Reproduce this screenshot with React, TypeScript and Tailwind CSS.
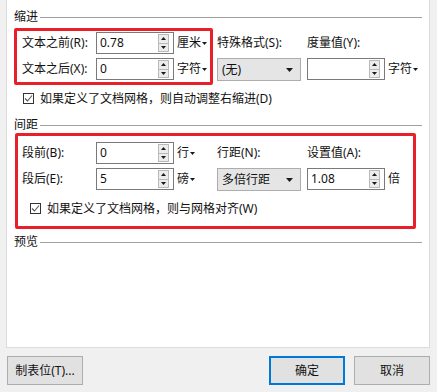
import React from 'react';

const Tri = ({ down = true, w = 7, h = 4, className = '' }: { down?: boolean; w?: number; h?: number; className?: string }) => (
  <svg width={w} height={h} viewBox={`0 0 ${w} ${h}`} className={className}>
    {down ? (
      <polygon points={`0,0 ${w},0 ${w / 2},${h}`} fill="#1a1a1a" />
    ) : (
      <polygon points={`0,${h} ${w},${h} ${w / 2},0`} fill="#1a1a1a" />
    )}
  </svg>
);

const Spin = ({ value }: { value: string }) => (
  <div className="flex items-center w-[78px] h-[22px] border border-[#7a7a7a] bg-white">
    <span className="flex-1 pl-[3px] leading-none">{value}</span>
    <div className="mr-[4px] flex flex-col w-[11px] h-[18px] border border-[#b9b9b9] bg-[#ececec]">
      <div className="flex-1 flex items-center justify-center border-b border-[#b9b9b9]">
        <Tri down={false} w={5} h={3} />
      </div>
      <div className="flex-1 flex items-center justify-center">
        <Tri w={5} h={3} />
      </div>
    </div>
  </div>
);

const Unit = ({ text, arrow = true }: { text: string; arrow?: boolean }) => (
  <div className="flex items-center ml-[3px]">
    <span>{text}</span>
    {arrow && <Tri w={5} h={3} className="ml-[1px]" />}
  </div>
);

const Select = ({ text }: { text: string }) => (
  <div className="flex items-center w-[84px] h-[23px] border border-[#adadad] bg-[#e5e5e5] pl-[4px] pr-[7px]">
    <span className="flex-1">{text}</span>
    <Tri w={7} h={4} />
  </div>
);

const Check = ({ label }: { label: string }) => (
  <div className="flex items-center ml-[9px] h-[11px]">
    <div className="w-[11px] h-[11px] border border-[#333] bg-white flex items-center justify-center">
      <svg width="9" height="9" viewBox="0 0 9 9">
        <polyline points="1,4.5 3.5,7 8,1.5" fill="none" stroke="#555" strokeWidth="1.1" />
      </svg>
    </div>
    <span className="ml-[6px] whitespace-nowrap">{label}</span>
  </div>
);

const Header = ({ text, className = '' }: { text: string; className?: string }) => (
  <div className={`flex items-center h-[16px] ${className}`}>
    <span>{text}</span>
    <div className="flex-1 h-px bg-[#a0a0a0] ml-[2px]" />
  </div>
);

const Row = ({ label, value, unit }: { label: string; value: string; unit: string }) => (
  <div className="flex items-center h-[22px]">
    <span className="w-[74px] whitespace-nowrap">{label}</span>
    <Spin value={value} />
    <Unit text={unit} />
  </div>
);

const RightCols = ({ l1, l2, sel, val, unit, arrow }: { l1: string; l2: string; sel: string; val: string; unit: string; arrow: boolean }) => (
  <div className="flex">
    <div className="flex flex-col w-[84px]">
      <div className="h-[22px] flex items-center whitespace-nowrap">{l1}</div>
      <div className="mt-[4px]"><Select text={sel} /></div>
    </div>
    <div className="flex flex-col ml-[6px]">
      <div className="h-[22px] flex items-center whitespace-nowrap">{l2}</div>
      <div className="mt-[4px] flex items-center">
        <Spin value={val} />
        <Unit text={unit} arrow={arrow} />
      </div>
    </div>
  </div>
);

export default function App() {
  return (
    <div className="w-[437px] h-[392px] bg-[#f0f0f0] overflow-hidden text-[12px] text-[#111] font-['Noto_Sans','Noto_Sans_CJK_SC',sans-serif]">
      {/* main panel */}
      <div className="ml-[6px] w-[424px] h-[348px] bg-white border-x border-b border-[#dcdcdc] pl-[7px] pr-[7px] flex flex-col">
        <Header text="缩进" className="mt-[9px]" />

        <div className="flex items-start mt-[3px]">
          <div className="w-[199px] h-[57px] border-[3px] border-[#e8202a] rounded-[2px] pt-[1px] pl-[5px] flex flex-col gap-[4px]">
            <Row label="文本之前(R):" value="0.78" unit="厘米" />
            <Row label="文本之后(X):" value="0" unit="字符" />
          </div>
          <div className="ml-[4px] pt-[4px]">
            <RightCols l1="特殊格式(S):" l2="度量值(Y):" sel="(无)" val="" unit="字符" arrow />
          </div>
        </div>

        <div className="mt-[8px]">
          <Check label="如果定义了文档网格，则自动调整右缩进(D)" />
        </div>

        <Header text="间距" className="mt-[13px]" />

        <div className="ml-[1px] w-[401px] h-[96px] border-[3px] border-[#e8202a] rounded-[2px] pt-[6px] pl-[4px] flex flex-col">
          <div className="flex items-start">
            <div className="w-[195px] flex flex-col gap-[4px]">
              <Row label="段前(B):" value="0" unit="行" />
              <Row label="段后(E):" value="5" unit="磅" />
            </div>
            <RightCols l1="行距(N):" l2="设置值(A):" sel="多倍行距" val="1.08" unit="倍" arrow={false} />
          </div>
          <div className="mt-[12px] -ml-[1px]">
            <Check label="如果定义了文档网格，则与网格对齐(W)" />
          </div>
        </div>

        <Header text="预览" className="mt-[5px]" />
      </div>

      {/* buttons */}
      <div className="flex mt-[8px] px-[7px]">
        <button className="w-[76px] h-[29px] bg-[#e1e1e1] border border-[#adadad]">制表位(T)...</button>
        <button className="ml-auto w-[76px] h-[29px] bg-[#e1e1e1] border-2 border-[#0078d7]">确定</button>
        <button className="ml-[9px] w-[76px] h-[29px] bg-[#e1e1e1] border border-[#adadad]">取消</button>
      </div>
    </div>
  );
}
